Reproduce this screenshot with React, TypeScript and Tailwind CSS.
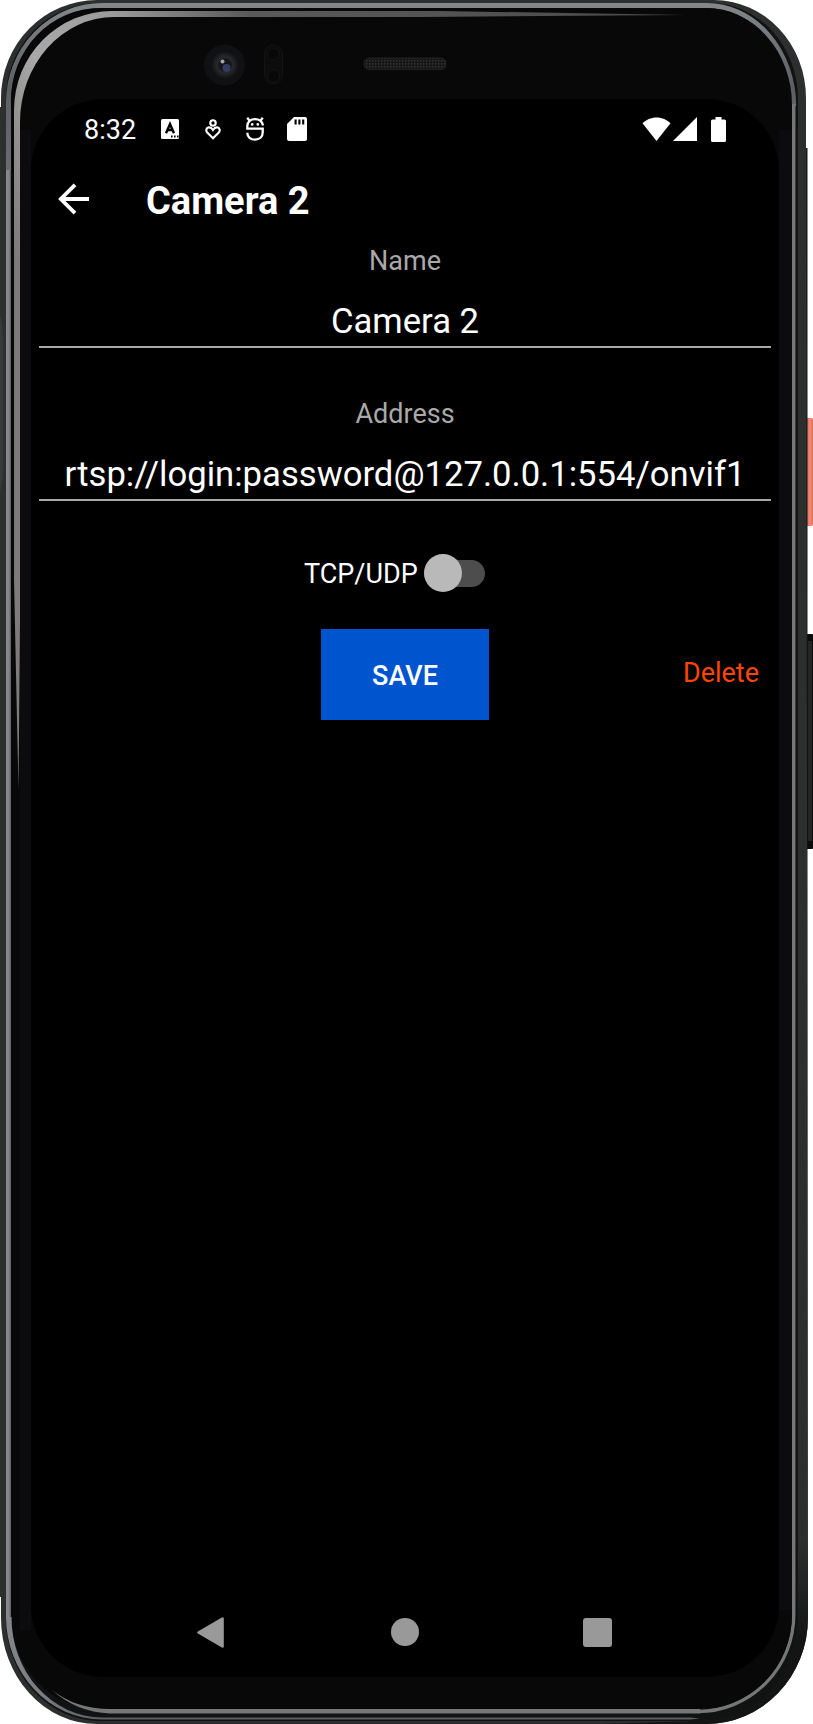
import React from "react";

function DeviceBody() {
  return (
    <svg className="absolute inset-0" width="813" height="1724" viewBox="0 0 813 1724" aria-hidden="true">
      <defs>
        <linearGradient id="rim" x1="0" y1="0" x2="0" y2="1724" gradientUnits="userSpaceOnUse">
          <stop offset="0" stopColor="#85898c" />
          <stop offset="0.05" stopColor="#5c5f63" />
          <stop offset="0.2" stopColor="#85858c" />
          <stop offset="0.94" stopColor="#85858c" />
          <stop offset="1" stopColor="#55585a" />
        </linearGradient>
        <linearGradient id="leftRim" x1="6" y1="0" x2="12" y2="0" gradientUnits="userSpaceOnUse">
          <stop offset="0" stopColor="#8a8a8c" />
          <stop offset="0.5" stopColor="#85858c" />
          <stop offset="1" stopColor="#40424a" />
        </linearGradient>
        <linearGradient id="gleam" x1="0" y1="200" x2="700" y2="0" gradientUnits="userSpaceOnUse">
          <stop offset="0" stopColor="#7d7b79" />
          <stop offset="0.1" stopColor="#a9a9a9" />
          <stop offset="0.22" stopColor="#9a9a9a" />
          <stop offset="0.4" stopColor="#5a5a5a" />
          <stop offset="1" stopColor="#4a4a4a" />
        </linearGradient>
        <linearGradient id="cornerRim" x1="8" y1="1618" x2="100" y2="1718" gradientUnits="userSpaceOnUse">
          <stop offset="0" stopColor="#85858c" />
          <stop offset="0.6" stopColor="#7b7c82" />
          <stop offset="1" stopColor="#5d6062" />
        </linearGradient>
        <linearGradient id="shade" x1="0" y1="1540" x2="0" y2="1640" gradientUnits="userSpaceOnUse">
          <stop offset="0" stopColor="#141415" stopOpacity="0" />
          <stop offset="1" stopColor="#141415" />
        </linearGradient>
        <linearGradient id="power" x1="806" y1="0" x2="813" y2="0" gradientUnits="userSpaceOnUse">
          <stop offset="0" stopColor="#d4604c" />
          <stop offset="0.55" stopColor="#f48a74" />
          <stop offset="1" stopColor="#dd6f5a" />
        </linearGradient>
        <radialGradient id="lens">
          <stop offset="0" stopColor="#10121c" />
          <stop offset="0.45" stopColor="#15171f" />
          <stop offset="0.6" stopColor="#28292b" />
          <stop offset="1" stopColor="#151517" />
        </radialGradient>
        <pattern id="mesh" width="3" height="3" patternUnits="userSpaceOnUse">
          <rect width="3" height="3" fill="#161616" />
          <rect width="1.4" height="1.6" fill="#333" />
        </pattern>
      </defs>

      <rect x="805" y="418" width="8" height="108" rx="2" fill="url(#power)" />
      <rect x="805" y="634" width="8" height="215" rx="1" fill="#0b0b0b" />
      <rect x="808" y="641" width="4" height="200" fill="#232423" />
      <rect x="0" y="107" width="4" height="1490" fill="#2f3131" />
      <rect x="804" y="148" width="3.5" height="1434" fill="#191a1a" />

      <path d="M97 0H714A92 98 0 0 1 806 98V148L808 1580V1618A102 106 0 0 1 706 1724H97A96 106 0 0 1 1 1618V98A96 98 0 0 1 97 0Z" fill="#2d2f2f" />
      <path d="M808 1540V1618A102 106 0 0 1 706 1724H600L694 1721A101 100 0 0 0 798 1618V1540Z" fill="url(#shade)" />
      <path d="M100 3H710A88 96 0 0 1 798 99V1620A98 100 0 0 1 700 1721H100A94 102 0 0 1 6 1619V98A94 95 0 0 1 100 3Z" fill="#111212" />
      <path d="M404 5.5H102A93.5 97 0 0 0 8.5 102V1619" fill="none" stroke="url(#rim)" strokeWidth="5" />
      <rect x="6" y="170" width="6" height="1450" fill="url(#leftRim)" />
      <path d="M404 5.5H706A87 101 0 0 1 793.7 106" fill="none" stroke="url(#rim)" strokeWidth="5" />
      <path d="M793.7 104V1614A96 97 0 0 1 698 1711.5" fill="none" stroke="#767676" strokeWidth="3.5" />

      <path d="M100 8H706A86 97 0 0 1 792 105V1616A92 94 0 0 1 700 1709H100A88 94 0 0 1 11 1616V100A89 92 0 0 1 100 8Z" fill="#080809" />
      <path d="M6 1617A96 103 0 0 0 102 1719.5H690L700 1718.5L690 1717.5H102A91 100 0 0 1 11.5 1617Z" fill="url(#cornerRim)" />
      <path d="M52 1690Q76 1709 110 1709H700V1713.5H110Q76 1712 52 1690Z" fill="#777" />
      <path d="M686 15L440 11H112A98 99 0 0 0 14 110V580L18.5 790L20 620V122A94 105 0 0 1 114 17H420Z" fill="url(#gleam)" />
      <rect x="20" y="130" width="11" height="1500" fill="#0c0b0e" />
      <rect x="779" y="130" width="13" height="1480" fill="#0c0b0e" />
      <rect x="796.5" y="130" width="1.5" height="1470" fill="#151515" />
      <path d="M0 316Q3 322 3 350V460Q3 482 0 492Z" fill="#363c3c" />

      <circle cx="224.5" cy="65" r="20.5" fill="#111113" />
      <circle cx="225" cy="65" r="13" fill="url(#lens)" />
      <circle cx="226.5" cy="68" r="4" fill="#343b60" />
      <circle cx="222.5" cy="61.5" r="2" fill="#a3a6ad" />
      <rect x="264.5" y="45" width="18" height="39" rx="9" fill="#0c0c0d" stroke="#131315" />
      <circle cx="273.5" cy="54" r="6" fill="#080809" stroke="#141416" />
      <circle cx="273.5" cy="76" r="6" fill="#080809" stroke="#141416" />
      <rect x="364" y="58" width="82" height="11.5" rx="5" fill="url(#mesh)" stroke="#202020" />
    </svg>
  );
}

function AlphaIcon() {
  return (
    <svg width="18" height="20" viewBox="0 0 18 20">
      <rect width="18" height="20" rx="1.5" fill="#fff" />
      <path d="M5 14.2L9 5L13 14.2M6.5 11H11.5" fill="none" stroke="#000" strokeWidth="2.4" />
      <path d="M10 17.5h1.6M13 17.5h1.6M16 17.5h1.6" stroke="#000" strokeWidth="1.8" />
    </svg>
  );
}

function HeartPersonIcon() {
  return (
    <svg width="16" height="21" viewBox="0 0 16 21" fill="none" stroke="#fff" strokeWidth="2.1">
      <circle cx="8" cy="4" r="2.7" />
      <path d="M8 19.2L2.2 13.5C.4 11.6 1.4 8.6 3.8 8.4C5.8 8.2 7 9.4 8 11C9 9.4 10.2 8.2 12.2 8.4C14.6 8.6 15.6 11.6 13.8 13.5Z" />
    </svg>
  );
}

function DroidIcon() {
  return (
    <svg width="18" height="24" viewBox="0 0 18 24" fill="none" stroke="#fff" strokeWidth="2.3">
      <path d="M1.2 .8L3.6 3.8M16.8 .8L14.4 3.8" />
      <path d="M17 8.5C16 4 13 2.2 9 2.2C5 2.2 1.3 4.5 1.3 9.2V11.7H16.7V15.5C16.7 20 13.4 22.6 9 22.6C4.6 22.6 1.3 20 1.3 15.8" />
      <circle cx="6.2" cy="7.4" r="1.3" fill="#fff" stroke="none" />
      <circle cx="11.8" cy="7.4" r="1.3" fill="#fff" stroke="none" />
    </svg>
  );
}

function SdCardIcon() {
  return (
    <svg width="20" height="24" viewBox="0 0 20 24">
      <path d="M7 0H18Q20 0 20 2V22Q20 24 18 24H2Q0 24 0 22V7Z" fill="#fff" />
      <path d="M8.6 2.5V7.6M12.4 2.5V7.6M16.2 2.5V7.6" stroke="#000" strokeWidth="2.1" />
    </svg>
  );
}

function StatusBar() {
  return (
    <div className="flex h-[60px] items-center pl-[53px] pr-[53px] text-white">
      <span className="w-[53px] pt-px text-[27px] leading-[32px]">8:32</span>
      <div className="ml-[24px] flex items-center">
        <AlphaIcon />
        <span className="ml-[25.5px]"><HeartPersonIcon /></span>
        <span className="ml-[25px]"><DroidIcon /></span>
        <span className="ml-[23.5px]"><SdCardIcon /></span>
      </div>
      <div className="ml-auto flex items-center">
        <svg width="29" height="24" viewBox="0 0 29 24">
          <path d="M14.5 24L.5 6.3C4 2.6 9 .4 14.5 .4S25 2.6 28.5 6.3Z" fill="#fff" />
        </svg>
        <svg className="ml-[2px]" width="24" height="24" viewBox="0 0 24 24">
          <path d="M0 24L24 0V24Z" fill="#fff" />
        </svg>
        <svg className="ml-[14px]" width="15" height="25" viewBox="0 0 15 25">
          <path d="M4.5 0H10.5V2.5H13.5Q15 2.5 15 4V23.5Q15 25 13.5 25H1.5Q0 25 0 23.5V4Q0 2.5 1.5 2.5H4.5Z" fill="#fff" />
        </svg>
      </div>
    </div>
  );
}

function Field({ label, value }: { label: string; value: string }) {
  return (
    <label className="block text-center">
      <span className="block h-[40px] text-[27px] leading-[40px] text-[#a9a9a9]">{label}</span>
      <span className="mx-[8px] block h-[67px] border-b-2 border-[#a8a8a8] pt-[15px] text-[34.65px] leading-[50px] whitespace-nowrap text-white">
        {value}
      </span>
    </label>
  );
}

export default function App() {
  return (
    <div className="relative h-[1724px] w-[813px] overflow-hidden bg-white font-['Roboto',sans-serif]">
      <DeviceBody />
      <div className="relative pt-[99px] pl-[31px]">
        <main className="flex h-[1578px] w-[748px] flex-col rounded-[72px] bg-black">
          <StatusBar />
          <header className="flex h-[82px] items-center pl-[27px]">
            <svg className="mb-[2px]" width="32" height="32" viewBox="0 0 32 32" fill="none" stroke="#fff" strokeWidth="3.8">
              <path d="M17 1.8L2.8 16L17 30.2M2.8 16H31" />
            </svg>
            <h1 className="ml-[56px] pt-[2px] text-[38px] leading-[48px] font-bold text-white">Camera 2</h1>
          </header>

          <Field label="Name" value="Camera 2" />
          <div className="mt-[46px]">
            <Field label="Address" value="rtsp://login:password@127.0.0.1:554/onvif1" />
          </div>

          <div className="mt-[52px] flex h-[40px] items-center pl-[273px]">
            <span className="w-[120px] pt-[2px] text-[27px] leading-[38px] text-white">TCP/UDP</span>
            <div className="flex h-[27px] w-[61px] items-center rounded-full bg-[#4d4d4d]">
              <div className="size-[38px] shrink-0 rounded-full bg-[#b9b9b9]" />
            </div>
          </div>

          <div className="mt-[36px] grid h-[91px] grid-cols-[290px_168px_1fr]">
            <button className="col-start-2 bg-[#0055cf] pt-[2px] text-[27px] leading-[40px] font-medium text-white">
              SAVE
            </button>
            <button className="mt-[24px] h-[40px] justify-self-end pr-[20px] text-[27px] leading-[40px] text-[#ff4500]">
              Delete
            </button>
          </div>

          <nav className="mt-auto flex h-[90px] items-center pl-[166px]">
            <svg width="27" height="31" viewBox="0 0 27 31">
              <path d="M1.5 15.5L25.5 1.5V29.5Z" fill="#999" stroke="#999" strokeWidth="2.6" strokeLinejoin="round" />
            </svg>
            <span className="ml-[167px] size-[28px] rounded-full bg-[#999]" />
            <span className="ml-[164px] size-[29px] rounded-[3px] bg-[#999]" />
          </nav>
        </main>
      </div>
    </div>
  );
}
